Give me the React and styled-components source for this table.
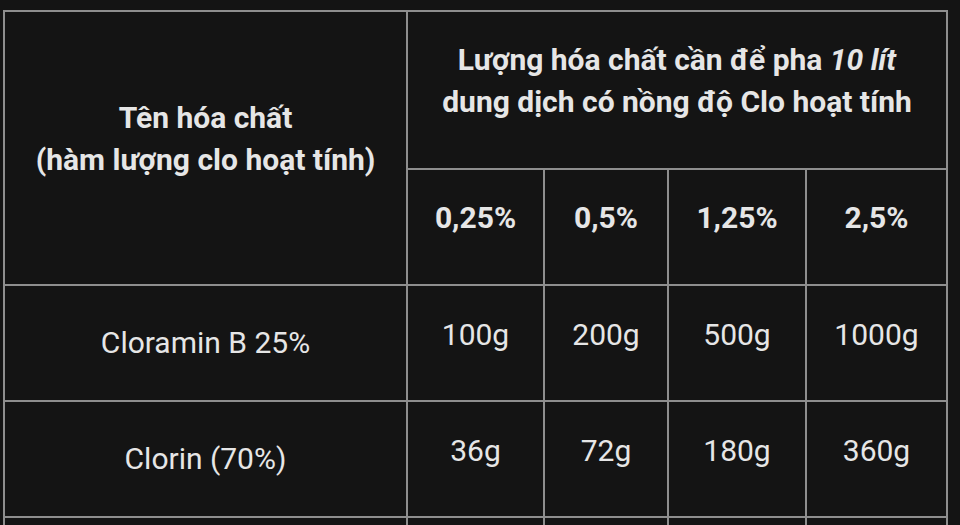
import React from "react";
import styled, { createGlobalStyle } from "styled-components";

const Global = createGlobalStyle`
  html, body {
    margin: 0;
    padding: 0;
    background: #141414;
    overflow: hidden;
    height: 525px;
  }
  body {
    font-family: Roboto, "Noto Sans", "Liberation Sans", sans-serif;
    color: #e6e6e6;
  }
`;

const Page = styled.div`
  width: 960px;
  height: 525px;
  background: #141414;
  padding: 10px 0 0 3px;
  box-sizing: border-box;
`;

const Table = styled.div`
  display: grid;
  grid-template-columns: 403px 137px 124px 138px 141px;
  grid-template-rows: 158px 116px 116px 116px 116px;
  border-top: 2px solid #8e8e8e;
  border-left: 2px solid #8e8e8e;
  width: max-content;
`;

const Cell = styled.div`
  box-sizing: border-box;
  border-right: 2px solid #8e8e8e;
  border-bottom: 2px solid #8e8e8e;
  display: flex;
  align-items: center;
  justify-content: center;
  text-align: center;
  font-size: 30px;
  font-weight: ${(p) => (p.$bold ? 700 : 400)};
  line-height: 42px;
  padding-bottom: ${(p) => p.$lift || 0}px;
  grid-column: ${(p) => p.$col || "auto"};
  grid-row: ${(p) => p.$row || "auto"};
  white-space: nowrap;
`;

const Em = styled.em`
  font-style: italic;
`;

const rows = [
  { name: "Cloramin B 25%", vals: ["100g", "200g", "500g", "1000g"] },
  { name: "Clorin (70%)", vals: ["36g", "72g", "180g", "360g"] },
  { name: "", vals: ["", "", "", ""] },
];

export default function App() {
  return (
    <>
      <Global />
      <Page>
        <Table>
          <Cell $bold $row="1 / span 2" $col="1" $lift={18}>
            Tên hóa chất
            <br />
            (hàm lượng clo hoạt tính)
          </Cell>
          <Cell $bold $col="2 / span 4" $lift={18}>
            <span>
              Lượng hóa chất cần để pha <Em>10 lít</Em>
              <br />
              dung dịch có nồng độ Clo hoạt tính
            </span>
          </Cell>
          {["0,25%", "0,5%", "1,25%", "2,5%"].map((c) => (
            <Cell key={c} $bold $lift={18}>
              {c}
            </Cell>
          ))}
          {rows.map((r, i) => (
            <React.Fragment key={i}>
              <Cell>{r.name}</Cell>
              {r.vals.map((v, j) => (
                <Cell key={j} $lift={16}>
                  {v}
                </Cell>
              ))}
            </React.Fragment>
          ))}
        </Table>
      </Page>
    </>
  );
}
